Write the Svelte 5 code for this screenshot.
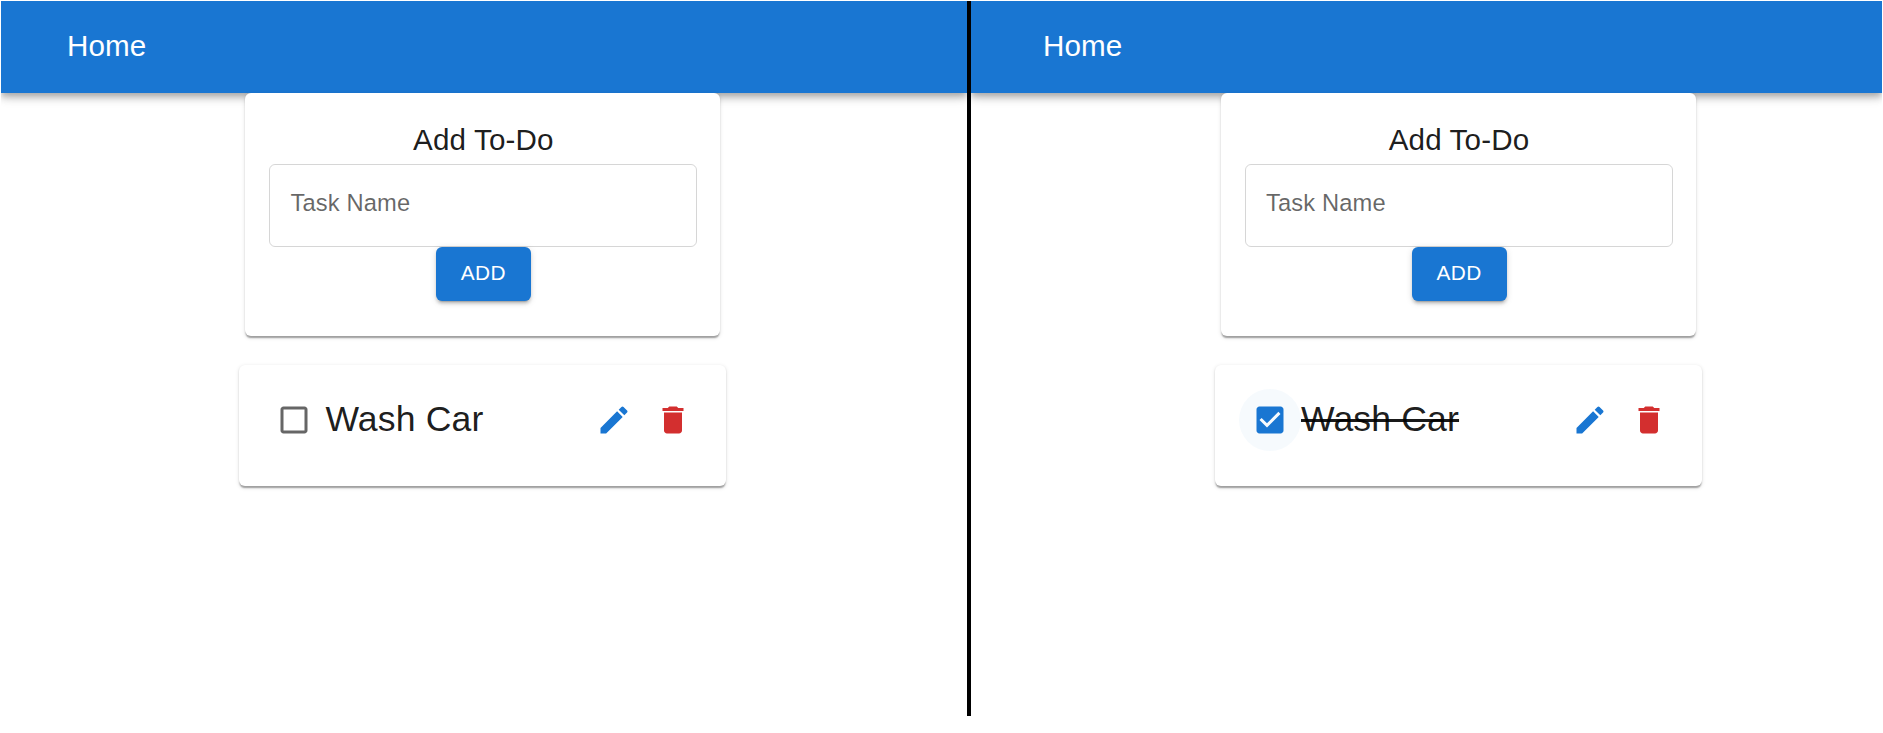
<script>
  const panes = [
    { id: 'open', done: false },
    { id: 'done', done: true }
  ];
</script>

<main>
  {#each panes as pane (pane.id)}
    <section class="pane {pane.id}">
      <header><span>Home</span></header>
      <div class="content">
        <form class="card add" onsubmit={(e) => e.preventDefault()}>
          <h2>Add To-Do</h2>
          <label class="field"><span>Task Name</span></label>
          <button class="submit" type="submit">ADD</button>
        </form>
        <article class="card task">
          <span class="check" class:done={pane.done}>
            <svg viewBox="0 0 24 24">
              {#if pane.done}
                <path d="M19 3H5c-1.11 0-2 .9-2 2v14c0 1.1.89 2 2 2h14c1.11 0 2-.9 2-2V5c0-1.1-.89-2-2-2zm-9 14l-5-5 1.41-1.41L10 14.17l7.59-7.59L19 8l-9 9z" />
              {:else}
                <path d="M19 5v14H5V5h14m0-2H5c-1.1 0-2 .9-2 2v14c0 1.1.9 2 2 2h14c1.1 0 2-.9 2-2V5c0-1.1-.9-2-2-2z" />
              {/if}
            </svg>
          </span>
          <span class="name" class:struck={pane.done}>Wash Car</span>
          <span class="actions">
            <svg class="edit" viewBox="0 0 24 24"><path d="M3 17.25V21h3.75L17.81 9.94l-3.75-3.75L3 17.25zM20.71 7.04c.39-.39.39-1.02 0-1.41l-2.34-2.34a.9959.9959 0 0 0-1.41 0l-1.83 1.83 3.75 3.75 1.83-1.83z" /></svg>
            <svg class="delete" viewBox="0 0 24 24"><path d="M6 19c0 1.1.9 2 2 2h8c1.1 0 2-.9 2-2V7H6v12zM19 4h-3.5l-1-1h-5l-1 1H5v2h14V4z" /></svg>
          </span>
        </article>
      </div>
    </section>
  {/each}
</main>

<style>
  :global(body) {
    background: #fff;
  }
  main {
    display: grid;
    grid-template-columns: 966px 911px;
    column-gap: 4px;
    box-sizing: border-box;
    width: 1883px;
    height: 733px;
    padding: 1px 0 17px 1px;
    overflow: hidden;
    color: rgba(0, 0, 0, 0.9);
    font-family: 'Liberation Sans', Arial, sans-serif;
    background: linear-gradient(#000, #000) 967px 1px / 4px 715px no-repeat;
  }
  .pane {
    overflow: hidden;
    min-width: 0;
  }
  header {
    display: flex;
    align-items: center;
    box-sizing: border-box;
    height: 92px;
    padding: 0 0 3px 66px;
    background: #1976d2;
    color: #fff;
    font-size: 29.6px;
    letter-spacing: 0.1px;
    line-height: 46px;
    box-shadow: 0 3px 6px -1px rgba(0, 0, 0, 0.2), 0 6px 7px rgba(0, 0, 0, 0.14), 0 1px 15px rgba(0, 0, 0, 0.12);
  }
  .done header {
    padding-left: 72px;
  }
  .content {
    display: flex;
    flex-direction: column;
    align-items: center;
    gap: 29px;
    position: relative;
    width: 487px;
    margin-left: 238.4px;
  }
  .pane.done .content {
    margin-left: 244px;
  }
  .card {
    box-sizing: border-box;
    background: #fff;
    border-radius: 6px;
    box-shadow: 0 3px 1.5px -1.5px rgba(0, 0, 0, 0.2), 0 1.5px 1.5px rgba(0, 0, 0, 0.14), 0 1.5px 4.5px rgba(0, 0, 0, 0.12);
  }
  .add {
    display: flex;
    flex-direction: column;
    align-items: center;
    width: 475px;
    height: 243px;
    padding: 23px 23px 0 24px;
  }
  h2 {
    margin: 0;
    font-size: 29.6px;
    font-weight: 400;
    line-height: 48px;
    letter-spacing: 0.15px;
  }
  .field {
    box-sizing: border-box;
    width: 428px;
    height: 83px;
    padding: 21px 19px 21px 20px;
    border: 1.5px solid rgba(0, 0, 0, 0.16);
    border-radius: 6px;
    color: rgba(0, 0, 0, 0.6);
    font-size: 23.7px;
    line-height: 34px;
    letter-spacing: 0.15px;
  }
  .submit {
    width: 95px;
    height: 54px;
    padding: 0 0 2px;
    border: 0;
    border-radius: 6px;
    background: #1976d2;
    color: #fff;
    font-family: inherit;
    font-size: 20.8px;
    letter-spacing: 0.4px;
    box-shadow: 0 4px 1.5px -3px rgba(0, 0, 0, 0.2), 0 3px 3px rgba(0, 0, 0, 0.14), 0 1.5px 7px rgba(0, 0, 0, 0.12);
  }
  .task {
    display: flex;
    align-items: flex-start;
    width: 487px;
    height: 121px;
    padding: 24px 24px 0;
  }
  .check {
    display: grid;
    place-items: center;
    width: 62px;
    height: 62px;
    border-radius: 50%;
    color: rgba(0, 0, 0, 0.6);
  }
  .check.done {
    color: #1976d2;
    background: rgba(25, 118, 210, 0.04);
  }
  svg {
    display: block;
    width: 36px;
    height: 36px;
    fill: currentColor;
  }
  .name {
    font-size: 35.6px;
    line-height: 60px;
    letter-spacing: 0.15px;
  }
  .struck {
    text-decoration: line-through;
    text-decoration-thickness: 2.5px;
  }
  .actions {
    display: flex;
    gap: 23.5px;
    margin: 13px 11px 0 auto;
  }
  .edit {
    color: #1976d2;
  }
  .delete {
    color: #d32f2f;
  }
</style>
